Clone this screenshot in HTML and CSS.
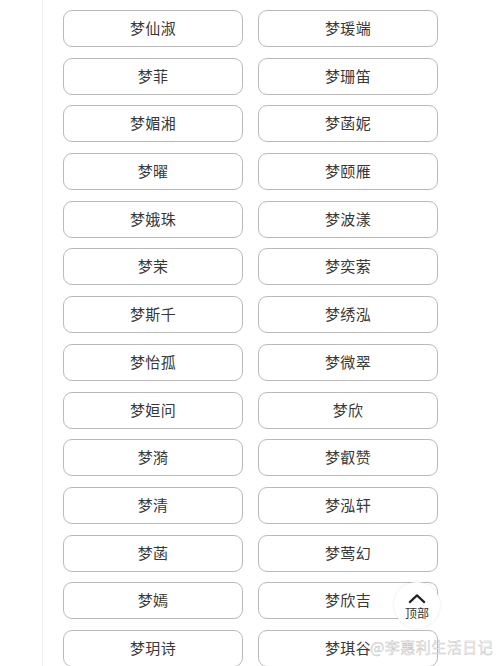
FILE: index.html
```html
<!DOCTYPE html>
<html lang="zh-CN">
<head>
<meta charset="utf-8">
<title>梦字开头的名字</title>
<link rel="stylesheet" href="styles.css">
</head>
<body>
<div class="rail">
  <div class="names">
    <div class="name">梦仙淑</div><div class="name">梦瑗端</div>
    <div class="name">梦菲</div><div class="name">梦珊笛</div>
    <div class="name">梦媚湘</div><div class="name">梦菡妮</div>
    <div class="name">梦曜</div><div class="name">梦颐雁</div>
    <div class="name">梦娥珠</div><div class="name">梦波漾</div>
    <div class="name">梦茉</div><div class="name">梦奕萦</div>
    <div class="name">梦斯千</div><div class="name">梦绣泓</div>
    <div class="name">梦怡孤</div><div class="name">梦微翠</div>
    <div class="name">梦姮问</div><div class="name">梦欣</div>
    <div class="name">梦漪</div><div class="name">梦叡赞</div>
    <div class="name">梦清</div><div class="name">梦泓轩</div>
    <div class="name">梦菡</div><div class="name">梦莺幻</div>
    <div class="name">梦嫣</div><div class="name">梦欣吉</div>
    <div class="name">梦玥诗</div><div class="name">梦琪谷</div>
  </div>
</div>
<a class="to-top" href="#">
  <svg class="to-top-icon" viewBox="0 0 20 12" width="18" height="11">
    <path d="M2 10 L10 2.5 L18 10" fill="none" stroke="#222" stroke-width="2.4" stroke-linecap="round" stroke-linejoin="round"/>
  </svg>
  <span class="to-top-label">顶部</span>
</a>
<div class="watermark">@李惠利生活日记</div>
</body>
</html>
```
FILE: styles.css
```css
html, body {
  margin: 0;
  padding: 0;
  background: #ffffff;
  height: 100%;
  overflow: hidden;
}

body {
  font-family: "Noto Sans CJK SC", "Noto Sans", sans-serif;
  color: #333333;
  position: relative;
}

.rail {
  margin-left: 42px;
  border-left: 1px solid #f1f1f1;
  padding-left: 20px;
  min-height: 100%;
}

.names {
  display: grid;
  grid-template-columns: 180px 180px;
  column-gap: 15px;
  row-gap: 10.7px;
  padding-top: 10px;
}

.name {
  box-sizing: border-box;
  height: 37px;
  padding-bottom: 2px;
  border: 1.5px solid #bababa;
  border-radius: 9px;
  display: flex;
  align-items: center;
  justify-content: center;
  font-size: 15px;
  color: #383838;
  letter-spacing: 0.3px;
}

.to-top {
  position: absolute;
  left: 394px;
  top: 582px;
  width: 46px;
  height: 46px;
  border-radius: 50%;
  background: #ffffff;
  box-shadow: 0 0 3px rgba(0, 0, 0, 0.1);
  display: flex;
  flex-direction: column;
  align-items: center;
  justify-content: center;
  text-decoration: none;
}

.to-top-icon {
  display: block;
  margin-top: 3px;
}

.to-top-label {
  font-size: 12px;
  line-height: 14px;
  color: #333333;
  margin-top: 2px;
}

.watermark {
  position: absolute;
  left: 370px;
  top: 637px;
  font-size: 15px;
  line-height: 20px;
  color: rgba(255, 255, 255, 0.9);
  -webkit-text-stroke: 0.5px rgba(150, 150, 150, 0.6);
  white-space: nowrap;
  letter-spacing: 0.5px;
}
```
